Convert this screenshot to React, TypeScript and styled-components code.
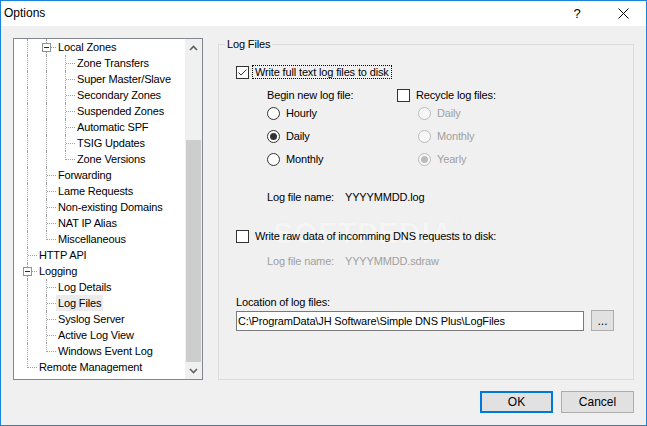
import React from 'react';
import styled, { createGlobalStyle } from 'styled-components';

const Global = createGlobalStyle`
  html, body { margin: 0; padding: 0; background: #f0f0f0; }
  body { width: 647px; height: 426px; overflow: hidden; font-family: "Liberation Sans", Arial, sans-serif; }
  * { box-sizing: border-box; }
`;

const Window = styled.div`
  width: 647px;
  height: 426px;
  border: 1px solid #1883d7;
  background: #f0f0f0;
  display: flex;
  flex-direction: column;
  font-size: 11px;
  letter-spacing: -0.15px;
  color: #000;
  position: relative;
`;

const TitleBar = styled.div`
  height: 25px;
  flex-shrink: 0;
  background: #fff;
  display: flex;
  align-items: center;
  padding-left: 3px;
  padding-bottom: 1px;
`;

const Title = styled.div`
  flex: 1;
  font-size: 12px;
  letter-spacing: 0;
`;

const CaptionButton = styled.div`
  width: 46px;
  height: 24px;
  display: flex;
  align-items: center;
  justify-content: center;
  font-size: 13px;
  letter-spacing: 0;
`;

const Body = styled.div`
  flex: 1;
  display: flex;
  flex-direction: column;
  padding: 12px 12px 0 12px;
`;

const Main = styled.div`
  display: flex;
  gap: 15px;
  height: 342px;
`;

/* ---------- tree ---------- */

const TreeBox = styled.div`
  width: 190px;
  flex-shrink: 0;
  border: 1px solid #828790;
  background: #fff;
  display: flex;
`;

const TreeContent = styled.div`
  flex: 1;
  padding-left: 4px;
  display: flex;
  flex-direction: column;
  overflow: hidden;
`;

const Row = styled.div`
  height: 16px;
  display: flex;
  align-items: center;
  flex-shrink: 0;
`;

const GuideCell = styled.span<{ $line: boolean }>`
  width: 19px;
  height: 16px;
  flex-shrink: 0;
  position: relative;
  &::before {
    content: '';
    display: ${p => (p.$line ? 'block' : 'none')};
    position: absolute;
    left: 9px;
    top: 0;
    bottom: 0;
    border-left: 1px dotted #a0a0a0;
  }
`;

const ConnCell = styled.span<{ $end: boolean }>`
  width: 19px;
  height: 16px;
  flex-shrink: 0;
  position: relative;
  &::before {
    content: '';
    position: absolute;
    left: 9px;
    top: 0;
    height: ${p => (p.$end ? '9px' : '16px')};
    border-left: 1px dotted #a0a0a0;
  }
  &::after {
    content: '';
    position: absolute;
    left: 10px;
    right: 0;
    top: 8px;
    border-top: 1px dotted #a0a0a0;
  }
`;

const Expander = styled.span`
  position: absolute;
  left: 5px;
  top: 4px;
  width: 9px;
  height: 9px;
  border: 1px solid #919191;
  background: #fff;
  z-index: 1;
  &::after {
    content: '';
    position: absolute;
    left: 1px;
    top: 3px;
    width: 5px;
    height: 1px;
    background: #2b2b2b;
  }
`;

const NodeLabel = styled.span<{ $selected?: boolean }>`
  padding: 0 2px;
  height: 16px;
  line-height: 16px;
  white-space: nowrap;
  background: ${p => (p.$selected ? '#ececec' : 'transparent')};
`;

const ScrollBar = styled.div`
  width: 17px;
  flex-shrink: 0;
  background: #f0f0f0;
  display: flex;
  flex-direction: column;
`;

const ScrollArrow = styled.div`
  height: 17px;
  flex-shrink: 0;
  display: flex;
  align-items: center;
  justify-content: center;
`;

const ScrollTrack = styled.div`
  flex: 1;
  display: flex;
  flex-direction: column;
  justify-content: flex-end;
`;

const ScrollThumb = styled.div`
  height: 222px;
  margin: 0 1px;
  background: #cdcdcd;
`;

/* ---------- group ---------- */

const Group = styled.fieldset`
  flex: 1;
  min-width: 0;
  margin: 0;
  padding: 0;
  border: 1px solid #dcdcdc;
  position: relative;
`;

const Legend = styled.legend`
  margin-left: 6px;
  padding: 0 2px;
  line-height: 13px;
  height: 13px;
`;

const GroupBody = styled.div`
  position: relative;
  z-index: 1;
  display: flex;
  flex-direction: column;
  padding: 14px 0 0 17px;
`;

const OptionRow = styled.label<{ $mt?: number; $ml?: number; $disabled?: boolean }>`
  display: flex;
  align-items: center;
  height: 14px;
  margin-top: ${p => p.$mt ?? 0}px;
  margin-left: ${p => p.$ml ?? 0}px;
  color: ${p => (p.$disabled ? '#a0a0a0' : '#000')};
  white-space: nowrap;
`;

const CheckBox = styled.span`
  width: 13px;
  height: 13px;
  flex-shrink: 0;
  border: 1px solid #333;
  background: #fff;
  display: flex;
  align-items: center;
  justify-content: center;
`;

const CheckText = styled.span<{ $focus?: boolean }>`
  margin-left: 3px;
  padding: 0 2px;
  line-height: 12px;
  border: 1px dotted ${p => (p.$focus ? '#000' : 'transparent')};
`;

const Radio = styled.span<{ $checked?: boolean; $disabled?: boolean }>`
  width: 13px;
  height: 13px;
  flex-shrink: 0;
  border-radius: 50%;
  border: 1px solid ${p => (p.$disabled ? '#bcbcbc' : '#333')};
  background: ${p => (p.$disabled ? '#f7f7f7' : '#fff')};
  display: flex;
  align-items: center;
  justify-content: center;
  margin-right: 6px;
  &::after {
    content: '';
    display: ${p => (p.$checked ? 'block' : 'none')};
    width: 7px;
    height: 7px;
    border-radius: 50%;
    background: ${p => (p.$disabled ? '#bcbcbc' : '#333')};
  }
`;

const Columns = styled.div`
  display: grid;
  grid-template-columns: 130px auto;
  margin: 9px 0 0 31px;
`;

const Column = styled.div`
  display: flex;
  flex-direction: column;
`;

const RadioList = styled.div<{ $indent?: number }>`
  display: flex;
  flex-direction: column;
  gap: 9px;
  margin: 4px 0 0 ${p => p.$indent ?? 0}px;
`;

const Caption = styled.div<{ $mt?: number }>`
  height: 14px;
  line-height: 14px;
  margin-top: ${p => p.$mt ?? 0}px;
`;

const FieldLine = styled.div<{ $mt: number; $disabled?: boolean }>`
  display: flex;
  height: 14px;
  line-height: 14px;
  margin: ${p => p.$mt}px 0 0 31px;
  color: ${p => (p.$disabled ? '#a0a0a0' : '#000')};
`;

const FieldName = styled.span`
  width: 78px;
`;

const PathRow = styled.div`
  display: flex;
  align-items: flex-end;
  gap: 7px;
  margin-top: 1px;
`;

const PathInput = styled.input`
  width: 348px;
  height: 20px;
  border: 1px solid #7a7a7a;
  background: #fff;
  padding: 0 1px;
  font: inherit;
  letter-spacing: inherit;
  color: #000;
  outline: none;
`;

const Button = styled.button<{ $default?: boolean; $w: number; $h: number }>`
  width: ${p => p.$w}px;
  height: ${p => p.$h}px;
  padding: 0;
  margin: 0;
  background: #e1e1e1;
  border: ${p => (p.$default ? '2px solid #0078d7' : '1px solid #adadad')};
  font-family: "Liberation Sans", Arial, sans-serif;
  font-size: 12px;
  color: #000;
  display: flex;
  align-items: center;
  justify-content: center;
`;

const Footer = styled.div`
  display: flex;
  justify-content: flex-end;
  gap: 8px;
  margin-top: 11px;
`;

const Watermark = styled.div`
  position: absolute;
  z-index: 0;
  left: 54px;
  top: 165px;
  font-size: 30px;
  font-weight: bold;
  letter-spacing: 1px;
  color: #f5f5f5;
  text-shadow: 0 0 1px #e6e6e6;
  pointer-events: none;
  sup { font-size: 9px; font-weight: normal; vertical-align: top; }
`;

type Item = { label: string; guides: boolean[]; end?: boolean; exp?: boolean; sel?: boolean };

const items: Item[] = [
  { label: 'Local Zones', guides: [true], exp: true },
  { label: 'Zone Transfers', guides: [true, true] },
  { label: 'Super Master/Slave', guides: [true, true] },
  { label: 'Secondary Zones', guides: [true, true] },
  { label: 'Suspended Zones', guides: [true, true] },
  { label: 'Automatic SPF', guides: [true, true] },
  { label: 'TSIG Updates', guides: [true, true] },
  { label: 'Zone Versions', guides: [true, true], end: true },
  { label: 'Forwarding', guides: [true] },
  { label: 'Lame Requests', guides: [true] },
  { label: 'Non-existing Domains', guides: [true] },
  { label: 'NAT IP Alias', guides: [true] },
  { label: 'Miscellaneous', guides: [true], end: true },
  { label: 'HTTP API', guides: [] },
  { label: 'Logging', guides: [], exp: true },
  { label: 'Log Details', guides: [true] },
  { label: 'Log Files', guides: [true], sel: true },
  { label: 'Syslog Server', guides: [true] },
  { label: 'Active Log View', guides: [true] },
  { label: 'Windows Event Log', guides: [true], end: true },
  { label: 'Remote Management', guides: [], end: true },
];

const Chevron = ({ up }: { up?: boolean }) => (
  <svg width="9" height="6" viewBox="0 0 9 6">
    <polyline
      points={up ? '1,5 4.5,1.5 8,5' : '1,1 4.5,4.5 8,1'}
      fill="none"
      stroke="#606060"
      strokeWidth="1.6"
    />
  </svg>
);

const Check = () => (
  <svg width="11" height="11" viewBox="0 0 11 11">
    <polyline points="1.5,5.5 4,8 9.5,2.5" fill="none" stroke="#333" strokeWidth="1" />
  </svg>
);

const CloseIcon = () => (
  <svg width="11" height="11" viewBox="0 0 11 11">
    <path d="M0.5 0.5 L10.5 10.5 M10.5 0.5 L0.5 10.5" stroke="#000" strokeWidth="1" />
  </svg>
);

export default function App() {
  return (
    <>
      <Global />
      <Window>
        <TitleBar>
          <Title>Options</Title>
          <CaptionButton>?</CaptionButton>
          <CaptionButton>
            <CloseIcon />
          </CaptionButton>
        </TitleBar>
        <Body>
          <Main>
            <TreeBox>
              <TreeContent>
                {items.map(it => (
                  <Row key={it.label}>
                    {it.guides.map((g, i) => (
                      <GuideCell key={i} $line={g} />
                    ))}
                    <ConnCell $end={!!it.end}>{it.exp && <Expander />}</ConnCell>
                    <NodeLabel $selected={it.sel}>{it.label}</NodeLabel>
                  </Row>
                ))}
              </TreeContent>
              <ScrollBar>
                <ScrollArrow>
                  <Chevron up />
                </ScrollArrow>
                <ScrollTrack>
                  <ScrollThumb />
                </ScrollTrack>
                <ScrollArrow>
                  <Chevron />
                </ScrollArrow>
              </ScrollBar>
            </TreeBox>
            <Group>
              <Legend>Log Files</Legend>
              <Watermark>
                SOFTPEDIA<sup>®</sup>
              </Watermark>
              <GroupBody>
                <OptionRow>
                  <CheckBox>
                    <Check />
                  </CheckBox>
                  <CheckText $focus>Write full text log files to disk</CheckText>
                </OptionRow>
                <Columns>
                  <Column>
                    <Caption>Begin new log file:</Caption>
                    <RadioList>
                      <OptionRow>
                        <Radio />
                        Hourly
                      </OptionRow>
                      <OptionRow>
                        <Radio $checked />
                        Daily
                      </OptionRow>
                      <OptionRow>
                        <Radio />
                        Monthly
                      </OptionRow>
                    </RadioList>
                  </Column>
                  <Column>
                    <OptionRow>
                      <CheckBox />
                      <CheckText>Recycle log files:</CheckText>
                    </OptionRow>
                    <RadioList $indent={21}>
                      <OptionRow $disabled>
                        <Radio $disabled />
                        Daily
                      </OptionRow>
                      <OptionRow $disabled>
                        <Radio $disabled />
                        Monthly
                      </OptionRow>
                      <OptionRow $disabled>
                        <Radio $disabled $checked />
                        Yearly
                      </OptionRow>
                    </RadioList>
                  </Column>
                </Columns>
                <FieldLine $mt={24}>
                  <FieldName>Log file name:</FieldName>
                  <span>YYYYMMDD.log</span>
                </FieldLine>
                <OptionRow $mt={25}>
                  <CheckBox />
                  <CheckText>Write raw data of incomming DNS requests to disk:</CheckText>
                </OptionRow>
                <FieldLine $mt={11} $disabled>
                  <FieldName>Log file name:</FieldName>
                  <span>YYYYMMDD.sdraw</span>
                </FieldLine>
                <Caption $mt={27}>Location of log files:</Caption>
                <PathRow>
                  <PathInput readOnly value={'C:\\ProgramData\\JH Software\\Simple DNS Plus\\LogFiles'} />
                  <Button $w={23} $h={21}>...</Button>
                </PathRow>
              </GroupBody>
            </Group>
          </Main>
          <Footer>
            <Button $default $w={73} $h={22}>OK</Button>
            <Button $w={73} $h={22}>Cancel</Button>
          </Footer>
        </Body>
      </Window>
    </>
  );
}
